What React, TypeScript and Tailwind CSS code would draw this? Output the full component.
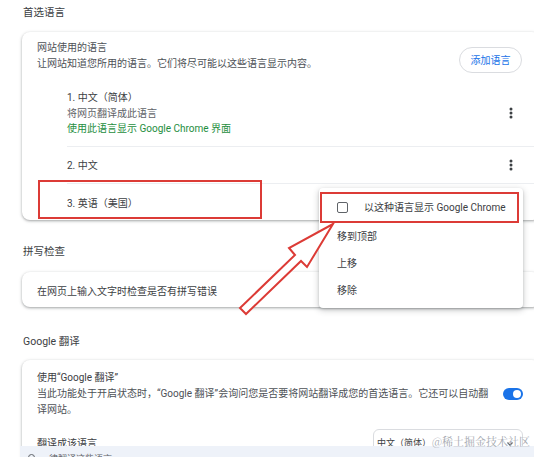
import React from 'react';

const font = "font-['Roboto','Noto_Sans_CJK_SC',sans-serif]";
const card =
  'w-[518px] rounded-[8px] bg-white shadow-[0_1px_2px_rgba(60,64,67,0.3),0_1px_3px_1px_rgba(60,64,67,0.15)]';

function Kebab() {
  return (
    <svg width="4" height="12" viewBox="0 0 4 12" className="shrink-0">
      <circle cx="2" cy="2" r="1.5" fill="#3c4043" />
      <circle cx="2" cy="6" r="1.5" fill="#3c4043" />
      <circle cx="2" cy="10" r="1.5" fill="#3c4043" />
    </svg>
  );
}

function LanguageItem({ lines, kebab, className }: { lines: React.ReactNode; kebab?: boolean; className: string }) {
  return (
    <div className={`flex items-center justify-between pr-[27px] ${className}`}>
      <div className="text-[10px] leading-[15.5px]">{lines}</div>
      {kebab && <Kebab />}
    </div>
  );
}

export default function App() {
  return (
    <div className={`relative w-[534px] h-[457px] overflow-hidden bg-white ${font}`}>
      <div className="pl-[22px]">
        {/* 首选语言 */}
        <h2 className="pl-[1px] pt-[5px] h-[32px] text-[10.5px] leading-[16px] text-[#3c4043]">首选语言</h2>
        <div className={card}>
          <div className="flex items-start justify-between pl-[15px] pr-[18px] pt-[8px]">
            <div className="text-[10px] leading-[16px] text-[#4d5156]">
              <div>网站使用的语言</div>
              <div>让网站知道您所用的语言。它们将尽可能以这些语言显示内容。</div>
            </div>
            <button className="mt-[7px] h-[26px] w-[63px] rounded-full border border-[#dadce0] text-[10px] text-[#1a73e8]">
              添加语言
            </button>
          </div>

          <div className="pl-[45px]">
            <LanguageItem
              kebab
              className="pt-[17px] pb-[9px] border-b border-[#eceef1]"
              lines={
                <>
                  <div className="text-[#3c4043]">1. 中文（简体）</div>
                  <div className="text-[#5f6368]">将网页翻译成此语言</div>
                  <div className="text-[#1e8e3e]">使用此语言显示 Google Chrome 界面</div>
                </>
              }
            />
            <LanguageItem
              kebab
              className="pt-[11px] pb-[10px] border-b border-[#eceef1]"
              lines={<div className="text-[#3c4043]">2. 中文</div>}
            />
            <LanguageItem
              className="pt-[12px] pb-[8px]"
              lines={<div className="text-[#3c4043]">3. 英语（美国）</div>}
            />
          </div>
        </div>

        {/* 拼写检查 */}
        <h2 className="pl-[1px] mt-[24px] mb-[12px] text-[10.5px] leading-[16px] text-[#3c4043]">拼写检查</h2>
        <div className={`${card} pl-[15px] pt-[12px] pb-[7px] text-[10px] leading-[16px] text-[#3c4043]`}>
          在网页上输入文字时检查是否有拼写错误
        </div>

        {/* Google 翻译 */}
        <h2 className="pl-[1px] mt-[27px] mb-[10px] text-[10.5px] leading-[16px] text-[#3c4043]">Google 翻译</h2>
        <div className={`${card} pl-[15px] pr-[17px] pt-[10px] pb-[20px]`}>
          <div className="flex items-center justify-between gap-[6px]">
            <div className="w-[460px] text-[10px] leading-[16px] text-[#4d5156]">
              <div className="text-[#3c4043]">使用“Google 翻译”</div>
              <div>当此功能处于开启状态时，“Google 翻译”会询问您是否要将网站翻译成您的首选语言。它还可以自动翻译网站。</div>
            </div>
            <div className="flex h-[12px] w-[20px] shrink-0 items-center justify-end rounded-full bg-[#1a73e8] pr-[2px]">
              <div className="h-[8px] w-[8px] rounded-full bg-white" />
            </div>
          </div>
          <div className="mt-[11px] flex items-center justify-between">
            <span className="text-[10px] text-[#3c4043]">翻译成该语言</span>
            <div className="flex h-[30px] w-[150px] items-center justify-between rounded-[6px] border border-[#dadce0] pl-[3px] pr-[9px] text-[9px] text-[#3c4043]">
              <span>中文（简体）</span>
              <svg width="6" height="4" viewBox="0 0 6 4">
                <path d="M0.5 0.5 L3 3.2 L5.5 0.5" stroke="#5f6368" strokeWidth="1.2" fill="none" />
              </svg>
            </div>
          </div>
        </div>
      </div>

      {/* bottom strip */}
      <div className="absolute left-[20px] right-0 top-[446px] h-[20px] bg-[#eef2f9] flex items-start pl-[8px] pt-[8px] gap-[5px] text-[9px] text-[#5f6368]">
        <div className="h-[7px] w-[7px] rounded-full border border-[#5f6368]" />
        <span className="leading-[10px]">一律翻译这些语言</span>
      </div>

      {/* watermark */}
      <div className="absolute left-[432px] top-[433px] whitespace-nowrap text-[11px] leading-[16px] text-[#a4a9b0] font-['Noto_Serif_CJK_SC','Noto_Sans_CJK_SC',serif]">
        @稀土掘金技术社区
      </div>

      {/* context menu */}
      <div className="absolute left-[319px] top-[188px] w-[204px] rounded-[4px] bg-white py-[4px] text-[10px] text-[#3c4043] shadow-[0_2px_6px_rgba(60,64,67,0.3),0_1px_2px_rgba(60,64,67,0.2)]">
        <div className="flex h-[31px] items-center pl-[18px]">
          <div className="h-[11px] w-[11px] rounded-[2px] border-[1.5px] border-[#5f6368]" />
          <span className="ml-[16px]">以这种语言显示 Google Chrome</span>
        </div>
        <div className="flex h-[27px] items-center pl-[18px]">移到顶部</div>
        <div className="flex h-[27px] items-center pl-[18px]">上移</div>
        <div className="flex h-[27px] items-center pl-[18px]">移除</div>
      </div>

      {/* annotations */}
      <div className="absolute left-[38px] top-[180px] h-[39px] w-[224px] border-2 border-[#dc3b36]" />
      <div className="absolute left-[320px] top-[192px] h-[31px] w-[199px] border-2 border-[#dc3b36]" />
      <svg className="absolute left-0 top-0 pointer-events-none" width="534" height="457">
        <polygon
          points="333,224 307,267 301,261 246,314 240,308 295,255 289,248"
          fill="white"
          stroke="#dc3b36"
          strokeWidth="2"
          strokeLinejoin="miter"
        />
      </svg>
    </div>
  );
}
